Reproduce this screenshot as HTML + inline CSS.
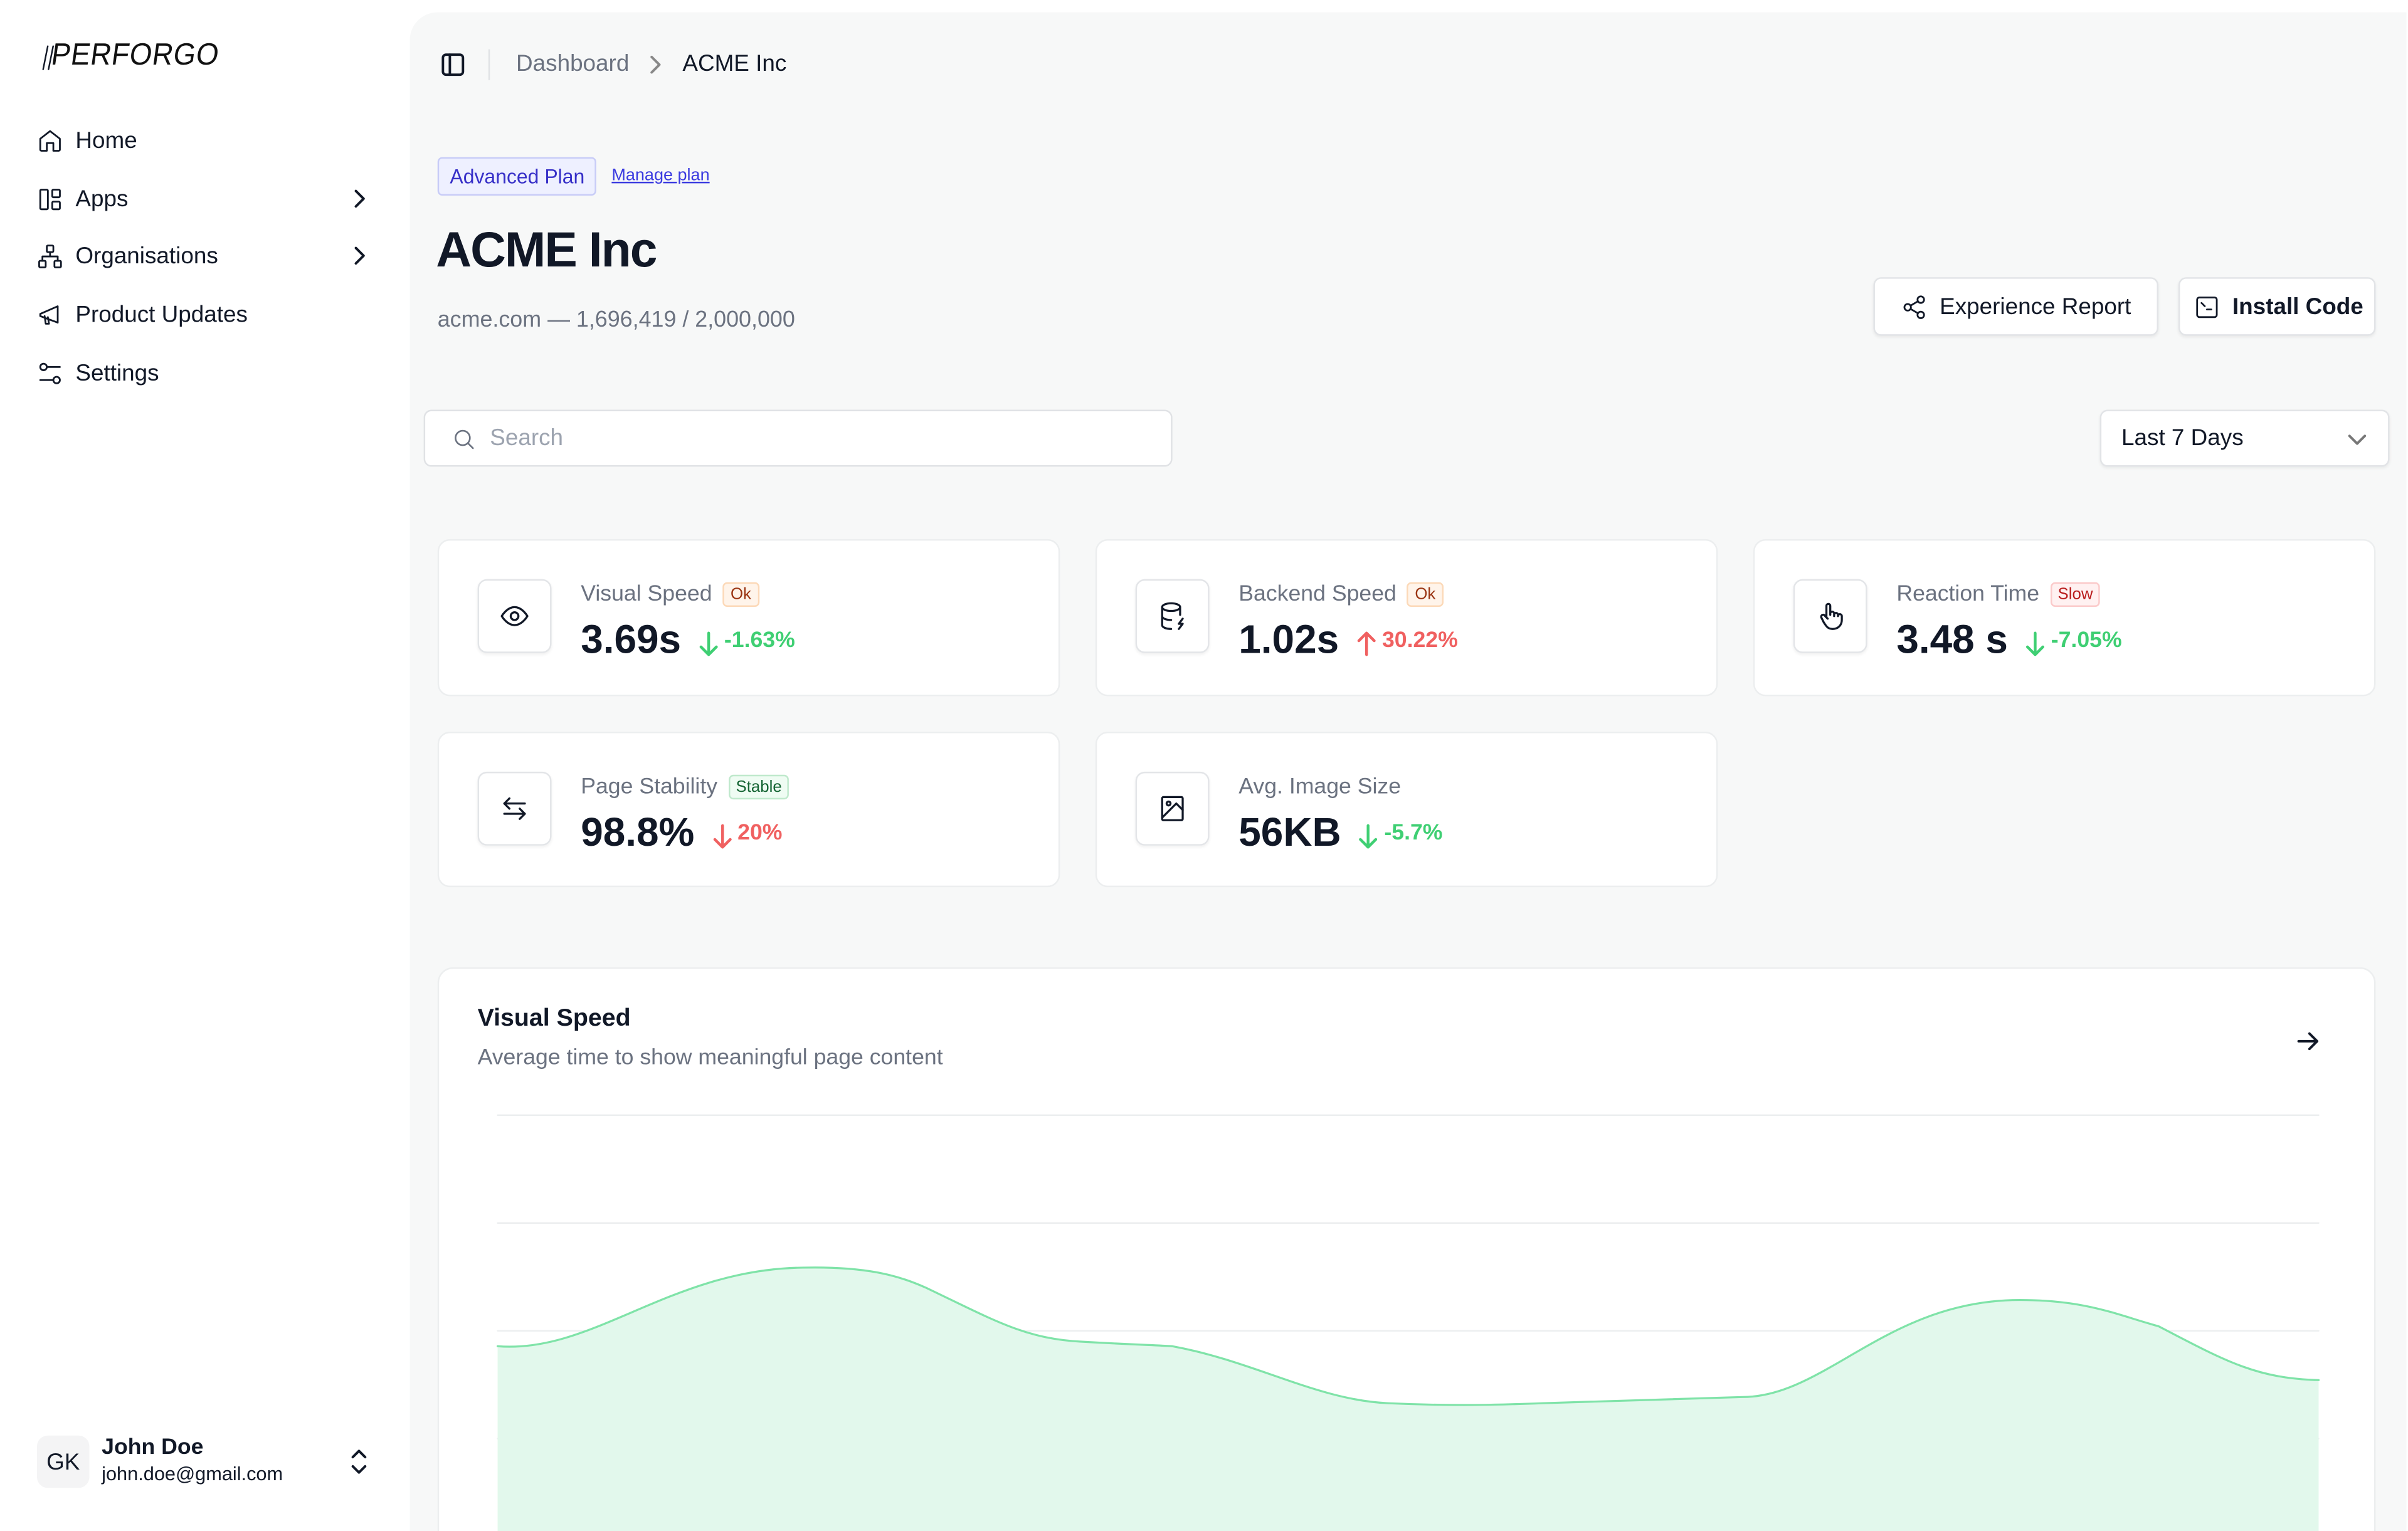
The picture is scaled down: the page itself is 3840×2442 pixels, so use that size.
<!DOCTYPE html>
<html><head><meta charset="utf-8">
<style>
*{box-sizing:border-box;margin:0;padding:0}
html,body{width:3840px;height:2441px;overflow:hidden;background:#fff;font-family:"Liberation Sans",sans-serif;color:#111827}
#w{position:absolute;left:0;top:0;width:1563px;height:994px;transform:scale(2.45682);transform-origin:0 0;overflow:hidden}
.a{position:absolute;white-space:nowrap}
.nav{position:absolute;left:24px;font-size:15px;display:flex;align-items:center;height:20px}
.nav svg{width:17px;height:17px;margin-right:8px}
.chev{position:absolute;left:228px;width:10px;height:12px}
.main{position:absolute;left:266px;top:8px;width:1296px;height:990px;background:#f7f8f8;border-top-left-radius:18px}
.card{position:absolute;background:#fff;border:1px solid #eceeef;border-radius:8px}
.ib{position:absolute;left:25px;top:25px;width:48px;height:48px;border:1px solid #e3e5e8;border-radius:6px;box-shadow:0 1px 2px rgba(0,0,0,.06);display:flex;align-items:center;justify-content:center}
.ib svg{width:20px;height:20px}
.lbl{position:absolute;left:92px;top:27px;font-size:14.5px;color:#6b7280;display:flex;align-items:center}
.tag{font-size:10.5px;border-radius:3px;padding:1px 4px;margin-left:7px;border:1px solid}
.ok{background:#fff4ea;border-color:#fcd9b8;color:#9a3412}
.slow{background:#fff1f1;border-color:#fbcaca;color:#b91c1c}
.st{background:#effcf3;border-color:#bfe9cc;color:#166534}
.val{position:absolute;left:92px;top:49px;font-size:26px;font-weight:bold;display:flex;align-items:baseline}
.chg{font-size:14.5px;font-weight:bold;margin-left:11px;display:flex;align-items:center}
.chg svg{width:14px;height:16px;margin-right:3px;stroke-width:1.8;position:relative;top:2px}
.g{color:#3fcf73}.r{color:#f06060}
.btn{position:absolute;background:#fff;border:1px solid #e2e4e7;border-radius:5px;box-shadow:0 1px 2px rgba(0,0,0,.06);font-size:15px;font-weight:500;display:flex;align-items:center}
svg{fill:none;stroke:currentColor;stroke-width:1.6;stroke-linecap:round;stroke-linejoin:round}
</style></head><body><div id="w">
<svg class="a" style="left:27px;top:29px;width:10px;height:17px" viewBox="0 0 10 17"><path d="M4 1L1 16M7.5 1L4.5 16" stroke-width="1"/></svg>
<div class="a" style="left:35px;top:25px;font-size:20px;transform:skewX(-8deg) scaleX(.93);transform-origin:0 0;letter-spacing:.3px;color:#111">PERFORGO</div>

<div class="nav" style="top:81px"><svg viewBox="0 0 24 24"><path d="M3 10l9-7 9 7v10a1 1 0 0 1-1 1h-5v-7h-6v7H4a1 1 0 0 1-1-1z"/></svg>Home</div>
<div class="nav" style="top:119px"><svg viewBox="0 0 24 24"><rect x="3" y="3" width="7" height="18" rx="1"/><rect x="14" y="3" width="7" height="7" rx="1"/><rect x="14" y="14" width="7" height="7" rx="1"/></svg>Apps</div>
<div class="nav" style="top:156px"><svg viewBox="0 0 24 24"><rect x="9" y="2" width="6" height="6" rx="1"/><rect x="2" y="16" width="6" height="6" rx="1"/><rect x="16" y="16" width="6" height="6" rx="1"/><path d="M5 16v-4h14v4M12 8v4"/></svg>Organisations</div>
<div class="nav" style="top:194px"><svg viewBox="0 0 24 24"><path d="M3 11l16-7v15L3 13zM7 13l1 7h3l-1-6"/></svg>Product Updates</div>
<div class="nav" style="top:232px"><svg viewBox="0 0 24 24"><circle cx="6" cy="6" r="3"/><circle cx="18" cy="18" r="3"/><path d="M9 6h12M3 18h12"/></svg>Settings</div>
<svg class="chev" style="top:123px" viewBox="0 0 10 12"><path d="M3 1l5 5-5 5"/></svg>
<svg class="chev" style="top:160px" viewBox="0 0 10 12"><path d="M3 1l5 5-5 5"/></svg>

<div class="a" style="left:24px;top:932px;width:34px;height:34px;background:#f4f4f5;border-radius:7px;font-size:15px;display:flex;align-items:center;justify-content:center">GK</div>
<div class="a" style="left:66px;top:932px;font-size:14.5px;font-weight:bold">John Doe</div>
<div class="a" style="left:66px;top:950px;font-size:12.5px">john.doe@gmail.com</div>
<svg class="a" style="left:227px;top:941px;width:12px;height:16px" viewBox="0 0 12 16"><path d="M2 5l4-4 4 4M2 11l4 4 4-4"/></svg>

<div class="main">
<svg class="a" style="left:20px;top:26px;width:16px;height:16px" viewBox="0 0 16 16"><rect x="1.5" y="1.5" width="13" height="13" rx="2"/><path d="M6 1.5v13"/></svg>
<div class="a" style="left:51px;top:24px;width:1px;height:20px;background:#e0e2e5"></div>
<div class="a" style="left:69px;top:25px;font-size:15px;color:#6b7280">Dashboard</div>
<svg class="a" style="left:154px;top:28px;width:10px;height:12px;color:#888" viewBox="0 0 10 12"><path d="M3 1l5 5-5 5"/></svg>
<div class="a" style="left:177px;top:25px;font-size:15px">ACME Inc</div>

<div class="a" style="left:18px;top:94px;height:25px;padding:0 7px;background:#eef0ff;border:1px solid #c8ccf7;border-radius:3px;font-size:13px;color:#3730c8;line-height:23px">Advanced Plan</div>
<div class="a" style="left:131px;top:100px;font-size:11px;color:#3b3be0;text-decoration:underline">Manage plan</div>
<div class="a" style="left:17px;top:136px;font-size:32px;font-weight:bold;letter-spacing:-.8px">ACME Inc</div>
<div class="a" style="left:18px;top:192px;font-size:14.6px;color:#6b7280">acme.com — 1,696,419 / 2,000,000</div>

<div class="btn" style="left:950px;top:172px;width:185px;height:38px;padding-left:17px"><svg style="width:17px;height:17px;margin-right:8px" viewBox="0 0 24 24"><circle cx="18" cy="5" r="3"/><circle cx="6" cy="12" r="3"/><circle cx="18" cy="19" r="3"/><path d="M8.6 13.5l6.8 4M15.4 6.5l-6.8 4"/></svg>Experience Report</div>
<div class="btn" style="left:1148px;top:172px;width:128px;height:38px;padding-left:9px;font-weight:bold"><svg style="width:17px;height:17px;margin-right:8px" viewBox="0 0 24 24"><rect x="3" y="3" width="18" height="18" rx="2"/><path d="M7 8l3 3M12 14h4"/></svg>Install Code</div>

<div class="a" style="left:9px;top:258px;width:486px;height:37px;background:#fff;border:1px solid #e0e2e5;border-radius:5px"></div>
<svg class="a" style="left:27px;top:269px;width:16px;height:16px;color:#6b7280" viewBox="0 0 24 24"><circle cx="11" cy="11" r="7"/><path d="M21 21l-5-5"/></svg>
<div class="a" style="left:52px;top:268px;font-size:15px;color:#9ca3af">Search</div>

<div class="btn" style="left:1097px;top:258px;width:188px;height:37px;padding-left:13px;font-weight:normal">Last 7 Days<svg style="position:absolute;right:14px;top:13px;width:12px;height:10px;color:#777" viewBox="0 0 12 10"><path d="M1 3l5 5 5-5"/></svg></div>

<div class="card" style="left:18px;top:342px;width:404px;height:102px">
<div class="ib"><svg viewBox="0 0 24 24"><path d="M2 12s4-7 10-7 10 7 10 7-4 7-10 7S2 12 2 12z"/><circle cx="12" cy="12" r="3"/></svg></div>
<div class="lbl">Visual Speed<span class="tag ok">Ok</span></div>
<div class="val">3.69s<span class="chg g"><svg viewBox="0 0 14 16"><path d="M7 1v14M2 10l5 5 5-5"/></svg>-1.63%</span></div></div>

<div class="card" style="left:445px;top:342px;width:404px;height:102px">
<div class="ib"><svg viewBox="0 0 24 24"><ellipse cx="11" cy="5" rx="7" ry="3"/><path d="M4 5v14c0 1.7 3 3 7 3M18 5v6M4 12c0 1.7 3 3 7 3M20 14l-3 4h3l-3 4"/></svg></div>
<div class="lbl">Backend Speed<span class="tag ok">Ok</span></div>
<div class="val">1.02s<span class="chg r"><svg viewBox="0 0 14 16"><path d="M7 15V1M2 6l5-5 5 5"/></svg>30.22%</span></div></div>

<div class="card" style="left:872px;top:342px;width:404px;height:102px">
<div class="ib"><svg viewBox="0 0 24 24"><path d="M9 13V4a1.5 1.5 0 0 1 3 0v7M12 10a1.5 1.5 0 0 1 3 0v2M15 11a1.5 1.5 0 0 1 3 0v1M18 12a1.5 1.5 0 0 1 3 0v3c0 4-3 7-7 7s-5-2-7-5l-2-4a1.5 1.5 0 0 1 3-1l2 2"/></svg></div>
<div class="lbl">Reaction Time<span class="tag slow">Slow</span></div>
<div class="val">3.48 s<span class="chg g"><svg viewBox="0 0 14 16"><path d="M7 1v14M2 10l5 5 5-5"/></svg>-7.05%</span></div></div>

<div class="card" style="left:18px;top:467px;width:404px;height:101px">
<div class="ib"><svg viewBox="0 0 24 24"><path d="M4 8h16M8 4L4 8l4 4M20 16H4M16 12l4 4-4 4"/></svg></div>
<div class="lbl">Page Stability<span class="tag st">Stable</span></div>
<div class="val">98.8%<span class="chg r"><svg viewBox="0 0 14 16"><path d="M7 1v14M2 10l5 5 5-5"/></svg>20%</span></div></div>

<div class="card" style="left:445px;top:467px;width:404px;height:101px">
<div class="ib"><svg viewBox="0 0 24 24"><rect x="4" y="3" width="16" height="18" rx="1"/><circle cx="9" cy="8" r="1.5"/><path d="M20 13l-5-5-11 11"/></svg></div>
<div class="lbl">Avg. Image Size</div>
<div class="val">56KB<span class="chg g"><svg viewBox="0 0 14 16"><path d="M7 1v14M2 10l5 5 5-5"/></svg>-5.7%</span></div></div>

<div class="card" style="left:18px;top:620px;width:1258px;height:380px;border-radius:10px">
<div class="a" style="left:25px;top:24px;font-size:16px;font-weight:bold">Visual Speed</div>
<div class="a" style="left:25px;top:50px;font-size:14.5px;color:#6b7280">Average time to show meaningful page content</div>
<svg class="a" style="left:1205px;top:39px;width:16px;height:16px" viewBox="0 0 16 16"><path d="M2 8h12M9 3l5 5-5 5"/></svg>
<svg class="a" style="left:0;top:0;width:1258px;height:380px" viewBox="0 0 1258 380">
<g stroke="#eceeef" stroke-width="1"><path d="M38 95H1220M38 165H1220M38 235H1220M38 305H1220"/></g>
<path d="M38 245C100 250 150 195 236 194C280 193 300 200 316 207C360 228 380 240 416 242C450 244 460 244 476 245C530 255 570 280 616 282C660 284 690 283 716 282C780 280 820 279 846 278C900 278 940 215 1026 215C1070 215 1090 225 1116 232C1160 255 1180 266 1220 267V380H38Z" fill="#e2f8ec" stroke="none"/>
<path d="M38 245C100 250 150 195 236 194C280 193 300 200 316 207C360 228 380 240 416 242C450 244 460 244 476 245C530 255 570 280 616 282C660 284 690 283 716 282C780 280 820 279 846 278C900 278 940 215 1026 215C1070 215 1090 225 1116 232C1160 255 1180 266 1220 267" stroke="#7fe3a8" stroke-width="1.3"/>
</svg>
</div>
</div>
</div></body></html>
